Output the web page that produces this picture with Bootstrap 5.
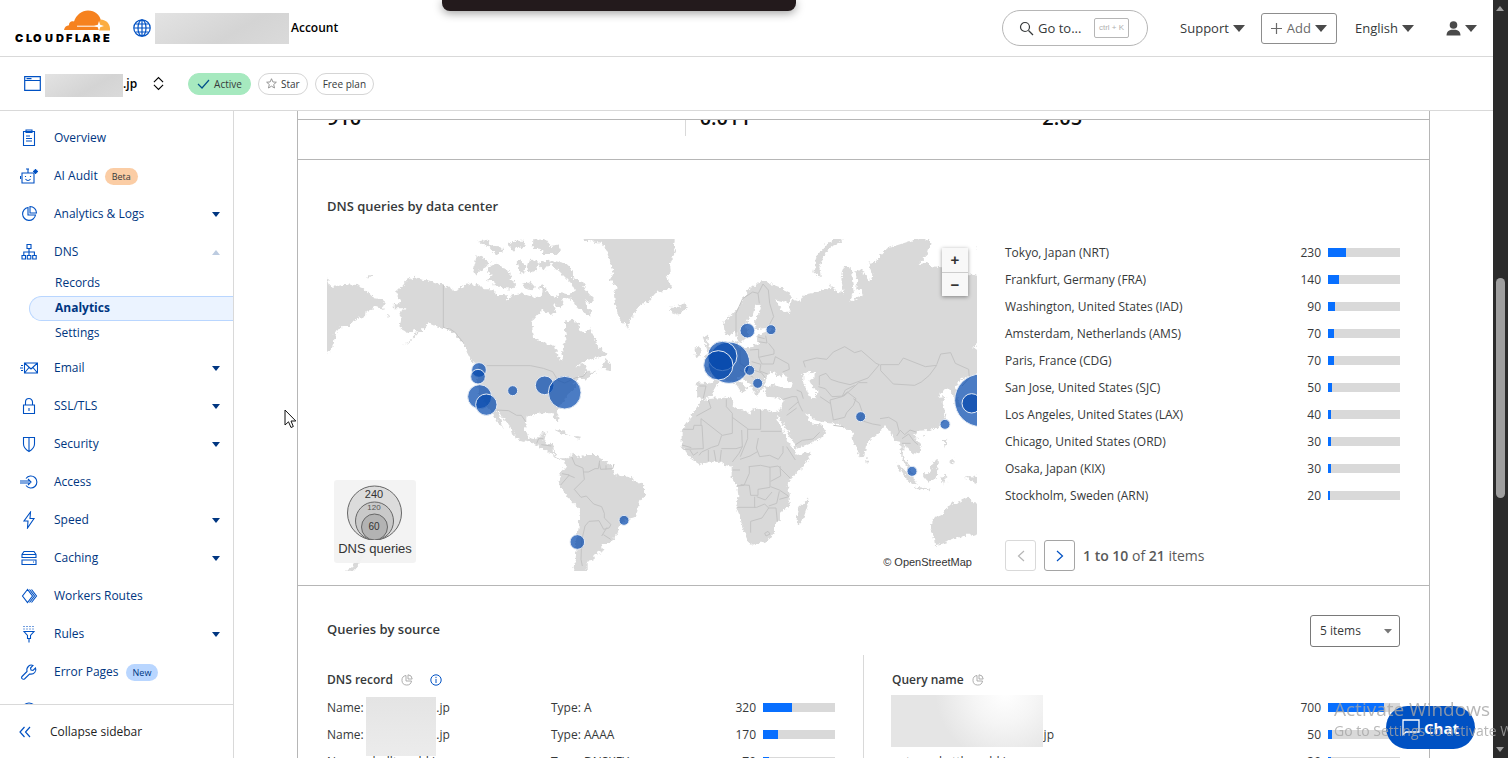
<!DOCTYPE html>
<html lang="en">
<head>
<meta charset="utf-8">
<meta name="viewport" content="width=device-width, initial-scale=1">
<title>DNS Analytics | Cloudflare</title>
<link href="https://cdn.jsdelivr.net/npm/bootstrap@5.3.0/dist/css/bootstrap.min.css" rel="stylesheet">
<style>
body{font:12px/20px "Open Sans","Noto Sans",sans-serif;color:#36393a;background:#fff;overflow:hidden}
a{color:inherit;text-decoration:none}
button{font:inherit}
svg{flex:none;display:block}
.ln{fill:none;stroke:currentColor;stroke-width:1.2}
.blue{color:#0051c3}
.top-row{height:57px;border-bottom:1px solid #d9d9d9;padding:0 16px 0 15px}
.brand{margin-right:22px}
.zone-row{height:54px;border-bottom:1px solid #d9d9d9;padding:0 24px}
.s13{font-size:13px}
.redact{background:linear-gradient(150deg,#e3e3e3,#d4d4d4 60%,#dadada)}
.redact-account{width:134px;height:31px;margin:0 2px 0 4px}
.redact-zone{width:78px;height:23px}
.goto{width:146px;height:36px;border:1px solid #b6b6b6;border-radius:18px;background:#fff;color:#36393a;padding:0 18px 0 16px;margin-right:32px}
.keys{border:1px solid #b6b6b6;border-radius:2px;color:#b0b0b0;font:8px/18px "Liberation Sans",sans-serif;padding:0 4px;height:20px;background:none}
.tri{width:0;height:0;border:6px solid transparent;border-top:7px solid #4a4a4a;border-bottom:0}
.addbtn{height:31px;border:1px solid #8d8d8d;border-radius:3px;background:#fff;color:#6a6a6a;padding:0 9px 0 8px;margin:0 18px 0 16px}
.userlink{margin-left:32px}
.pill{height:22px;border:1px solid #d5d5d5;border-radius:11px;background:#fff;font-size:10px;line-height:20px;padding:0 7px;color:#36393a}
.pill.on{background:#a6e9bf;border-color:#a6e9bf;padding:0 8px}
.side{width:234px;border-right:1px solid #d9d9d9;color:#003681}
.side-nav{padding-top:8px}
.side-nav a{height:38px;padding:0 13px 0 20px}
.side-nav a svg.ico{width:18px;height:18px;color:#0051c3;stroke-width:1.1;margin-right:16px}
.sub{margin-bottom:3px}
.side-nav .sub a{height:25px;padding:0 0 1px 25px;margin-left:29px;border:1px solid transparent;border-right:0;border-radius:13px 0 0 13px}
.side-nav .sub a.current{background:#ebf3ff;border-color:#b9d6ff;font-weight:700}
.caret{width:0;height:0;border:4px solid transparent;border-top:5px solid #003681;border-bottom:0}
.caret.up{border:4px solid transparent;border-bottom:5px solid #bccbe0;border-top:0}
.tag{font-size:9px;line-height:17px;border-radius:9px;padding:0 7px;margin-left:7px}
.tag-beta{background:#fbcda5;color:#36393a}
.tag-new{background:#b9d6ff;color:#003681}
.collapse-row{height:54px;border-top:1px solid #d9d9d9;color:#222;padding:0 19px;background:#fff;gap:19px}
.content-col{padding:0 63px;min-width:0}
.panel{border:1px solid #b6b6b6;border-width:0 1px;height:100%}
.strip{height:9px;border-bottom:1px solid #b6b6b6}
.stats{height:40px;padding:0 29px;overflow:hidden;border-bottom:1px solid #b6b6b6}
.stats b{font-size:20px;font-weight:600;line-height:28px;color:#111;display:block;padding-bottom:4px;margin-bottom:23px}
.stats b.cut{border-left:1px solid #d9d9d9;padding-left:14px}
.sect{padding:0 29px}
.sect-map{border-bottom:1px solid #b6b6b6;padding-top:36px;padding-bottom:14px}
.sect-src{padding-top:29px}
h2{font-size:13px;line-height:20px;font-weight:600;margin:0}
h3{font-size:12px;line-height:20px;font-weight:600;margin:0}
.map-grid{display:grid;grid-template-columns:650fr 395fr;gap:28px;margin-top:23px}
.map-box{position:relative}
.map-box svg{width:100%;height:auto}
.zoomer{position:absolute;top:9px;right:9px;width:26px;box-shadow:0 1px 4px rgba(0,0,0,.4)}
.zoomer button{display:block;width:26px;height:24px;border:0;background:#f8f8f8;color:#333;font:700 15px/22px "Liberation Sans",sans-serif;padding:0}
.zoomer button+button{border-top:1px solid #ccc}
.credit{position:absolute;right:5px;bottom:0;font:11px/18px "Liberation Sans",sans-serif;color:#333}
.legend-box{position:absolute;left:7px;bottom:8px;width:82px;height:83px;border-radius:3px;background:rgba(242,242,242,.94);font:13px/17px "Liberation Sans",sans-serif;color:#333;text-align:center}
.data{width:100%;table-layout:fixed}
.data td{height:27px;padding:0;white-space:nowrap}
.data .num{width:60px;text-align:right;padding-right:7px}
.data .bar{width:72px}
.data .kind{width:152px}
.masked{display:inline-block;width:83px;text-align:right}
.masked.wide{width:162px}
.progress{--bs-progress-height:9px;--bs-progress-bg:#d9d9d9;--bs-progress-bar-bg:#086fff;border-radius:0}
.pgbtn{width:31px;height:31px;border:1px solid #a5a5a5;border-radius:3px;background:#fff;color:#0051c3;padding:0}
.pgbtn:disabled{border-color:#d9d9d9;color:#b6b6b6}
.count{color:#595959;font-size:14px}
.count b{font-weight:600}
.picker{width:90px;height:32px;border:1px solid #797979;border-radius:3px;padding:0 9px;color:#36393a;appearance:none;background:#fff url("data:image/svg+xml,%3Csvg xmlns='http://www.w3.org/2000/svg' width='8' height='5'%3E%3Cpath d='M0 0h8L4 4.500z' fill='%23777'/%3E%3C/svg%3E") no-repeat right 7px center}
.src-grid{display:grid;grid-template-columns:1fr 1px 1fr;gap:28px;margin-top:8px}
.src-grid .rule{background:#d9d9d9;height:200px}
.src-head{padding:15px 0 4px}
.mask-names{position:absolute;left:39px;top:42px;width:70px;height:59px;background:linear-gradient(#e4e4e4,#ececec)}
.mask-query{position:absolute;left:-1px;top:40px;width:152px;height:52px;background:radial-gradient(circle at 75% -5%,#fff,#f5f5f5 25%,#e5e5e5 55%)}
.dimmed{color:#a5a5a5;stroke-width:.9}
.info{margin-left:17px;stroke-width:1}
.rail{width:15px;background:#2b2b2b;position:relative}
.rail span{position:absolute;left:3px;width:9px;border-radius:5px;background:#9f9f9f;top:36.7%;height:29%}
.rail i{position:absolute;left:3px;border:4px solid transparent}
.rail .u{top:2px;border-bottom:5px solid #9f9f9f}
.rail .d{bottom:2px;border-top:5px solid #9f9f9f}
.tab-top{position:fixed;left:442px;top:0;width:354px;height:11px;background:#231a1c;border-radius:0 0 8px 8px;box-shadow:0 2px 10px rgba(0,0,0,.4)}
.pointer{position:fixed;left:284px;top:409px}
.chat{position:fixed;right:33px;bottom:9px;width:89px;height:43px;border:0;border-radius:22px;background:#0051c3;color:#fff;font-size:15px;font-weight:700}
.notice{position:fixed;left:1334px;bottom:16px;color:rgba(165,165,165,.8);white-space:nowrap;font-size:14px;line-height:22px;pointer-events:none}
.notice div{font-size:19px}
</style>
</head>
<body class="vh-100 d-flex">
<div class="d-flex flex-column flex-grow-1 overflow-hidden">
  <header class="top-row d-flex align-items-center flex-shrink-0">
    <a href="#" aria-label="Cloudflare" class="brand"><svg width="96" height="36" viewBox="0 0 96 36">
      <path d="M49 20c.500-3 2.500-4.500 5-4.700-.400-3 2.500-5 5-3.800C61 5 67 .5 73 .5c7 0 12 4.500 13 10.500l-2 9z" fill="#f6821f"/>
      <path d="M84 20.500H95c.500-6-3-11-10-11l-1 6z" fill="#fbad41"/>
      <path d="M62 16.200h20" stroke="#fff" fill="none"/>
      <path d="M84 11l1.200 3.800L89 16l-3.800 1.200L84 21l-1.200-3.800L79 16l3.800-1.200z" fill="#fff"/>
      <text y="32" font-family="Inter,sans-serif" font-weight="900" font-size="11" fill="#000"><tspan x="0">C</tspan><tspan x="11">L</tspan><tspan x="18">O</tspan><tspan x="30">U</tspan><tspan x="41">D</tspan><tspan x="51">F</tspan><tspan x="60">L</tspan><tspan x="67">A</tspan><tspan x="78">R</tspan><tspan x="88">E</tspan></text></svg></a>
    <svg class="ln blue" width="18" height="18" viewBox="0 0 18 18"><circle cx="9" cy="9" r="8.200"/><ellipse cx="9" cy="9" rx="4" ry="8.200"/><path d="M9 1v16M1 9h16M2.500 5h13M2.500 13h13"/></svg>
    <span class="redact redact-account"></span>
    <a href="#" class="fw-semibold text-black">Account</a>
    <div class="ms-auto d-flex align-items-center s13">
      <button class="goto d-flex align-items-center"><svg class="ln me-1" width="15" height="15" viewBox="0 0 15 15"><circle cx="6" cy="6" r="4.500"/><path d="M9.500 9.500L14 14"/></svg>Go to...<kbd class="keys ms-auto">ctrl + K</kbd></button>
      <a href="#" class="d-flex align-items-center">Support<span class="tri ms-1"></span></a>
      <button class="addbtn d-flex align-items-center"><svg class="ln me-1" width="13" height="13" viewBox="0 0 13 13"><path d="M6.500 1v11M1 6.500h11"/></svg>Add<span class="tri ms-1"></span></button>
      <a href="#" class="d-flex align-items-center">English<span class="tri ms-1"></span></a>
      <a href="#" class="userlink d-flex align-items-center gap-1" aria-label="User"><svg width="15" height="15" viewBox="0 0 15 15" fill="#4a4a4a"><circle cx="7.500" cy="4" r="3.800"/><path d="M.5 14.500c0-4 2.500-5.500 5-5.800h4c2.500.300 5 1.800 5 5.800z"/></svg><span class="tri"></span></a>
    </div>
  </header>
  <div class="zone-row d-flex align-items-center flex-shrink-0">
    <svg class="ln blue" width="17" height="15" viewBox="0 0 17 15"><path d="M.7.700h15.600v13.600H.7zM.7 4.500h15.600M2.500 2.600h5"/></svg>
    <span class="redact redact-zone ms-1 mt-1"></span><span class="text-black fw-semibold">.jp</span>
    <button class="border-0 bg-transparent p-0 mx-3 pe-2 ps-0" aria-label="Switch site"><svg class="ln text-black" width="11" height="15" viewBox="0 0 12 15"><path d="M1 6l5-5 5 5M1 9l5 5 5-5"/></svg></button>
    <div class="d-flex s-gap" style="gap:7px">
    <span class="pill on d-flex align-items-center"><svg class="ln me-1" style="color:#00508a" width="13" height="10" viewBox="0 0 13 10"><path d="M1 5l4 4 7-8"/></svg>Active</span>
    <button class="pill d-flex align-items-center"><svg class="me-1" width="11" height="11" viewBox="0 0 12 12" fill="none" stroke="#8d8d8d"><path d="M6 .8l1.500 3.500 3.800.300-2.900 2.500.900 3.800L6 8.900 2.700 10.900l.900-3.800L.7 4.600l3.800-.3z"/></svg>Star</button>
    <span class="pill">Free plan</span>
    </div>
  </div>
  <div class="d-flex flex-grow-1 overflow-hidden">
    <aside class="side d-flex flex-column flex-shrink-0">
      <nav class="side-nav flex-grow-1 overflow-hidden" id="nav"></nav>
      <button class="collapse-row d-flex align-items-center border-start-0 border-end-0 border-bottom-0 flex-shrink-0"><svg class="ln blue" width="12" height="12" viewBox="0 0 12 12"><path d="M5.500 1L1 6l4.500 5M11 1L6.500 6l4.500 5"/></svg>Collapse sidebar</button>
    </aside>
    <main class="content-col flex-grow-1 overflow-hidden">
      <div class="panel">
        <div class="strip"></div>
        <div class="stats row g-0 align-items-end flex-nowrap"><b class="col-4">910</b><b class="col-4 cut">0.011</b><b class="col-4">2.05</b></div>
        <section class="sect sect-map">
          <h2>DNS queries by data center</h2>
          <div class="map-grid">
            <div class="map-box">
              <svg viewBox="0 0 1950 996" role="img" aria-label="World map of DNS queries">
                <defs><filter id="coast" x="0" y="0" width="100%" height="100%" color-interpolation-filters="sRGB"><feTurbulence type="fractalNoise" baseFrequency=".1" numOctaves="2" seed="4"/><feDisplacementMap in="SourceGraphic" scale="18" xChannelSelector="R" yChannelSelector="G"/></filter></defs>
                <g filter="url(#coast)">
                <g transform="translate(-21 -27)" fill="#d9d9d9">
                  <path d="M10 143L21 145 30 165 40 170 80 163 110 165 128 172 145 188 162 205 182 208 200 222 188 228 192 242 170 228 158 238 140 243 138 258 115 265 100 272 85 290 60 292 45 310 42 335 30 365 10 372z"/>
                  <path d="M138 140l10-4 10 3-8 5zM200 254l8 4-4 4zM75 1025l20-16 14-14 14-24 12 8-18 24-20 22z"/>
                  <path d="M285 140L300 148 330 152 345 160 370 163 405 182 430 168 452 158 458 168 470 162 492 178 520 178 528 195 560 195 562 212 575 195 605 190 640 200 665 200 668 180 655 170 672 165 690 195 705 205 720 185 730 215 725 235 700 225 705 250 690 255 668 238 650 255 638 270 634 300 640 322 665 335 705 348 712 375 722 392 730 380 725 355 740 335 735 300 735 275 755 270 775 280 778 300 795 310 808 295 825 325 835 350 860 375 830 385 800 390 775 405 762 415 790 402 800 410 795 425 830 425 805 440 795 450 780 440 760 460 770 470 745 490 735 510 715 530 710 545 718 575 708 572 698 550 660 550 620 560 615 600 625 622 645 628 660 622 665 608 680 605 672 640 700 642 702 672 720 685 740 685 735 695 710 685 690 668 655 650 630 635 600 630 580 618 575 595 555 570 535 545 526 538 540 565 552 597 535 580 515 545 495 520 478 495 470 460 472 420 480 405 455 395 440 365 430 340 405 312 385 297 345 288 325 280 300 305 280 325 250 347 275 325 292 305 280 300 262 310 238 292 245 265 235 250 260 235 220 235 222 222 245 215 228 185 245 170 262 150z"/>
                  <path d="M470 75l40 20-12 16-14 8-16 18-8-12zM505 110l25-12 14 12 28 18-2 22 20 14-12 12-30-2-28-8 4-14-24-2 18-14-16-10zM590 95l10-8 16 20-4 26-14-6zM630 85l26 10-4 24-20 10-10-12zM605 165l26-10 14 16-14 12zM475 35l24-6 14 14 12 8 26 2-4 14-20 4-24-22zM560 42l30-10 22 0 6 18-30 4-6 8zM640 30l36-2 14 20 24-4 8 14-12 14-40 0-6-14-26-4zM665 95l30-4 44 10 20 18 0 26 40 16-10 10 36 40-12 10-18-10 8 24 14 14-8 10-36-24-14-28-34-4-6-14 28 4 18-12-10-20-38-38-28-22-18 22-16-20zM675 230l30 4 4 14-24 6zM845 410l8-14 4-18 4 14 12 10 0 18-14-2zM700 598l30 6 22 14-16-4-20-8zM765 618l18 2-4 6-12-2z"/>
                  <path d="M785 15L1065 15 1062 50 1066 65 1050 100 1052 125 1038 140 1048 160 1060 168 1040 182 1010 185 985 215 955 228 945 250 930 270 925 293 910 280 895 260 885 225 882 190 890 170 870 150 880 120 868 95 862 65 845 38 800 32z"/>
                  <path d="M735 690L763 668 770 680 800 675 830 675 842 687 875 705 885 735 930 742 975 770 975 795 957 815 950 850 943 862 915 870 900 885 893 908 870 942 845 942 850 960 820 975 825 988 803 992 803 1035 760 1035 768 990 765 940 775 900 780 838 745 805 715 760 720 732 738 710z"/>
                </g>
                <g transform="translate(939 -27)" fill="#d9d9d9">
                  <path d="M375 150L395 163 420 172 445 183 456 205 445 218 420 212 402 208 418 225 424 245 452 245 445 225 465 208 482 212 492 195 515 190 545 182 572 176 565 160 590 185 612 190 604 150 612 112 632 110 636 150 642 190 628 216 650 205 668 198 662 180 648 178 652 150 645 125 665 118 690 155 697 135 685 98 708 95 722 75 742 55 790 40 850 20 872 38 862 75 835 103 870 95 870 108 905 112 985 132 1025 140 1025 340 998 350 1025 370 1025 430 990 440 960 450 945 475 950 500 965 530 950 530 938 490 925 475 900 488 898 500 922 498 908 515 916 550 912 575 898 592 870 600 835 602 822 615 845 650 842 665 822 674 806 655 792 645 788 675 802 695 810 715 822 735 812 735 796 705 784 680 780 635 765 632 748 600 735 585 725 600 690 630 678 650 672 680 660 682 640 635 636 600 620 600 606 592 600 582 570 580 530 572 505 555 495 550 510 572 525 585 540 582 558 600 548 620 520 635 470 656 462 640 440 600 415 562 408 548 418 545 428 508 400 502 380 500 372 485 376 475 360 478 352 500 338 480 330 465 318 450 300 440 292 445 318 470 322 478 306 490 290 465 262 450 240 450 228 470 212 500 190 508 172 500 170 457 210 460 222 450 215 432 195 420 200 410 235 385 262 370 280 350 278 335 292 330 296 350 330 352 355 340 352 315 378 305 402 300 398 292 350 297 345 270 362 240 362 222 345 225 340 250 322 270 318 290 325 310 318 325 300 340 290 320 288 300 270 315 254 308 250 275 275 255 295 235 310 205 325 180 350 160z"/>
                  <path d="M188 320L205 316 200 335 212 355 225 380 190 385 205 365zM164 355l14-8 8 10-4 20-18 4zM92 230l18 0 24-10 6 16-24 18-22-8zM520 127L530 77 560 43 585 25 612 25 606 35 572 50 550 80 538 110 543 145zM880 695l14-8-4 60-28 5-12-14-2-8 20 0zM768 700l22 16 36 34 0 16-16-8-24-28zM828 770l44 6-4 5-38-4zM905 740l16-3-8 8 6 14-8-6-2 16zM912 630l10-4-6 16 2 10-6-4zM930 690l12-4-2 14-12-2zM975 740l14-2 36 4 0 26-22-10zM678 682l8 14-6 4zM845 618l10-4-2 10zM1005 50l20-6 0 18zM-8 765L12 765 18 780 0 802z"/>
                  <path d="M185 510L205 507 240 505 272 500 280 512 278 530 300 538 330 550 338 535 375 540 412 545 412 565 432 610 445 640 468 665 470 675 512 665 508 685 490 710 455 742 443 765 450 800 448 825 420 848 420 868 405 885 405 905 385 932 365 938 330 944 320 925 308 895 303 870 288 832 295 800 292 770 275 745 275 710 255 705 240 695 210 695 180 704 150 685 125 650 125 600 150 565 165 540z"/>
                  <path d="M505 805L502 830 485 880 472 880 470 865 478 830 490 820zM985 800L1000 820 1025 822 1025 910 1000 918 985 910 960 925 940 925 925 935 905 942 885 945 882 925 873 890 875 868 905 855 925 830 940 815 955 822 965 808z"/>
                  <path fill="#fff" d="M490 430L512 425 525 430 522 445 508 452 520 475 532 480 530 505 510 503 500 480 490 460zM372 468L375 445 392 425 410 430 405 442 420 440 432 430 438 445 458 458 455 472 420 470 395 464 385 472z"/>
                </g>
                </g>
                <g fill="none" stroke="#c3c3c3" stroke-width="3" stroke-linejoin="round">
                  <g transform="translate(-21 -27)"><path d="M370 165v127l22 6 14 10 24 30M500 407h132l38 8 28 10 16 26 20 8 34-16 22-4 12-16M530 540l36 2 24 14 14 0 14 20M650 640l6-14 14 0M664 644l30 4M755 680l10 24 24 10 4 34-30 30 20 24 16-4 22 24 24 8 8 20 0 14 20 20-6 10-16 4-14-26-30 2-12 14-10 44-2 56 4 20M722 765l26-30-22-4M744 735l20 8M789 726l16 0 20-10 10 0 4-24M838 700l4 18 36-2 4-14M858 706l0 12M845 918l16-26M850 914l22 14"/></g>
                  <g transform="translate(939 -27)"><path d="M288 320l0-70 20-44 30-20 16 4 4 30M355 190l14-28 16 18 4 40 12 40-16 30M178 468l20 0-8 36M355 335l26 4-4-22M350 320l24 6M330 360l26-2 0 24 46-10 0-12-16-20M356 382l10 20 34 0 6-22 40 22 2 16-20 8M335 395l28 8-4 20 26 10M300 360l0 40 30 20M340 420l24 8 12 16M300 420l40 22M496 412l-6-18 40-10 30 4 20-22 34-16 30 18 20-6 44 38 10 4-34 40-54 20-34-8-24-8-14-18-20 8 0 28M722 404l54 0 14-20 66 26 34-4-22 30-24 20-20 10-64-4-38-40zM890 404l12-32 30-4 14 32 40 18 2 26-22 24M535 470l21 6 20 24 36-2 44-40 26 0M570 510l36-10 16-14 26 20-8 20-20 22-6 14-34 8zM640 506l18 14 10 30-10 20 40 12 24 4M540 500l30 20M606 500l10-20 28-14M610 590l-30-4M720 566l26-4 24 14 8 30-8 12M780 600l14 14 16-14 18 6M786 626l20-14 16 22 12 10M786 640l26 0M430 508l26-8 14 0 8 24 10 20M446 540l28-24M440 556l30-22M465 645l22-14 32-4 20-20M470 480l14 6 6 20M205 510l8 24-44 24M130 598h30l2-12 24 0 4 70-60 2M183 586l0-20 64 50 30-6 0-60-18-20 0-22M277 562l46 34 0 30-22 54M324 598l38 0 0-58M362 604h62M245 616l-10 30-20 6-30 14-8 10M244 656h44l20-6M244 660l-4 34M305 600l2 50-10 20-20 26M355 624l-6 30 10 26 30-4 26 12 14-20 0-20M300 688l30-10 24-14M328 710l0 20-16 36-22 2M326 710l36-4 28 6 0 60-36 6 0 18-22 0-4-30-26-2M388 712l26-4 36 36M420 708l2 30-30 16M392 770l26 10 30 20M350 800l26 10 20-24M290 832l60 0 24-10 12 12-20 30-34 10 0 34M344 800l0 34M418 784l-8 36-24 8M446 800l-28 8M440 650l26 40M386 834l22 0 4 40M374 910l10-6 6 8-12 6zM126 645l28 8M150 660l10 16 14-10M205 660l0 34M222 660l6 34M278 720h22"/></g>
                </g>
                <g id="pins" fill="#0649ad" fill-opacity=".72" stroke="#e4ebf5" stroke-width="3"></g>
              </svg>
              <div class="zoomer"><button aria-label="Zoom in">+</button><button aria-label="Zoom out">−</button></div>
              <div class="legend-box"><svg viewBox="0 0 82 60" fill="#dcdcdc" stroke="#666"><circle cx="40.500" cy="33" r="27"/><circle cx="40.500" cy="41" r="19" fill="#c9c9c9"/><circle cx="40.500" cy="47" r="13" fill="#b3b3b3"/><g fill="#333" stroke="none" text-anchor="middle" font-family="Liberation Sans,sans-serif"><text x="40" y="18" font-size="11">240</text><text x="40" y="30" font-size="8" fill="#555">120</text><text x="40" y="50" font-size="10">60</text></g></svg>DNS queries</div>
              <span class="credit">© OpenStreetMap</span>
            </div>
            <div class="d-flex flex-column justify-content-between">
              <table class="data" id="centers"></table>
              <div class="d-flex align-items-center gap-2">
                <button class="pgbtn d-flex align-items-center justify-content-center" disabled aria-label="Previous"><svg class="ln" width="8" height="12" viewBox="0 0 8 12"><path d="M7 1L1.500 6 7 11"/></svg></button>
                <button class="pgbtn d-flex align-items-center justify-content-center" aria-label="Next"><svg class="ln" width="8" height="12" viewBox="0 0 8 12"><path d="M1 1l5.500 5L1 11"/></svg></button>
                <span class="count"><b>1 to 10</b> of <b>21</b> items</span>
              </div>
            </div>
          </div>
        </section>
        <section class="sect sect-src">
          <div class="d-flex justify-content-between align-items-start"><h2 class="pt-1">Queries by source</h2><select class="picker" aria-label="Items per list"><option>5 items</option><option>10 items</option></select></div>
          <div class="src-grid">
            <div class="position-relative">
              <div class="src-head d-flex align-items-center"><h3>DNS record</h3><svg class="ln dimmed ms-2" width="12" height="12" viewBox="0 0 12 12"><path d="M5 1.500A4.800 4.800 0 1 0 10.500 7H5zM7 .8V5h4.200A4.500 4.500 0 0 0 7 .8z"/></svg><svg class="ln blue info" width="12" height="12" viewBox="0 0 12 12"><circle cx="6" cy="6" r="5.200"/><path d="M6 5v4M6 2.800v1.300"/></svg></div>
              <table class="data" id="records"></table>
              <div class="mask-names"></div>
            </div>
            <div class="rule"></div>
            <div class="position-relative">
              <div class="src-head d-flex align-items-center"><h3>Query name</h3><svg class="ln dimmed ms-2" width="12" height="12" viewBox="0 0 12 12"><path d="M5 1.500A4.800 4.800 0 1 0 10.500 7H5zM7 .8V5h4.200A4.500 4.500 0 0 0 7 .8z"/></svg></div>
              <table class="data" id="names"></table>
              <div class="mask-query"></div>
            </div>
          </div>
        </section>
      </div>
    </main>
  </div>
</div>
<div class="rail flex-shrink-0"><i class="u"></i><span></span><i class="d"></i></div>
<div class="tab-top"></div>
<svg class="pointer" width="13" height="20" viewBox="0 0 13 20"><path d="M1 1v15l3.500-3.200L7 18.500l2.300-1L7 12h4.800z" fill="#fff" stroke="#111"/></svg>
<button class="chat d-flex align-items-center justify-content-center gap-1"><svg width="18" height="17" viewBox="0 0 18 17" fill="none" stroke="#fff" stroke-width="1.300"><path d="M1 15.500V1h16v12H4z"/></svg>Chat</button>
<div class="notice"><div>Activate Windows</div>Go to Settings to activate Windows.</div>
<script src="https://cdn.jsdelivr.net/npm/bootstrap@5.3.0/dist/js/bootstrap.bundle.min.js"></script>
<script>
const nav = [
 ['Overview','<path d="M3.500 2.500h11v14h-11zM6 1h6v2.500H6zM6 7h4M6 9.500h6M6 12h6"/>'],
 ['AI Audit','<path d="M2 6h12v10H2zM8 6V2M6 2h3M5.500 9v1M10.500 9v1M5.500 12c1.500 2 3.500 2 5 0M.5 9v3M15.500 2v5M13 4.500h5M13.800 2.800l3.400 3.400M17.200 2.800l-3.400 3.400"/>','','Beta'],
 ['Analytics & Logs','<path d="M8 2.500A6.500 6.500 0 1 0 15.500 10H8zM10 1.500V8h6.500A6.500 6.500 0 0 0 10 1.500z"/>','down'],
 ['DNS','<path d="M7 1.500h4v4H7zM2 12.500h3.500V16H2zM7.300 12.500h3.500V16H7.300zM12.700 12.500h3.500V16h-3.500zM9 5.500v7M3.800 12.500V9h10.600v3.500"/>','up'],
 ['Email','<path d="M4.500 4h13v10h-13zM4.500 4L11 10l6.500-6M4.500 14L9 8.500M17.500 14L13 8.500M0 9h3M1 6.500h2M1 11.500h2"/>','down'],
 ['SSL/TLS','<path d="M3.500 8h11v8.500h-11zM5.500 8V5a3.500 3.500 0 0 1 7 0v3M9 11v3"/>','down'],
 ['Security','<path d="M3.500 2.500h11V9c0 4-3 6-5.500 7.500C6.500 15 3.500 13 3.500 9zM9 2.500v14"/>','down'],
 ['Access','<path d="M6 5.500a6 6 0 1 1 0 7M0 8h10M0 10h10M8 6l3 3-3 3"/>'],
 ['Speed','<path d="M10.500 1L4 10h4L7.500 17 14 7.500h-4z"/>','down'],
 ['Caching','<path d="M2 8.500V5.500L4 2.500h10l2 3v3zM2 5.500h14M2 11h14v4.500H2zM13 13h1"/>','down'],
 ['Workers Routes','<path d="M7.500 2.500L2.500 9l5 6.500 5-6.500zM9.500 2.500l5 6.500-5 6.500M11.500 2.500l5 6.500-5 6.500"/>'],
 ['Rules','<path d="M4 6.500h10l-3.500 4v3h-3v-3zM4 1v1M7 1v1M10 1v1M13 1v1M4 3.500v1M7 3.500v1M10 3.500v1M13 3.500v1M9 13.500v4"/>','down'],
 ['Error Pages','<path d="M2 15.500c-1-1 0-2 0-2l5-5C6 4 10 1 13 2.500L10.500 5l.500 2 2 .500L15.500 5C17 8 14 12 9.500 11l-5 5s-1.500.700-2.500-.5z"/>','','New'],
 ['Scrape Shield','<circle cx="9" cy="9" r="7"/><circle cx="9" cy="9" r="3"/>']];
document.getElementById('nav').innerHTML = nav.map(([t,p,c,g]) =>
 `<a href="#" class="d-flex align-items-center"><svg class="ico ln" viewBox="0 0 18 18">${p}</svg>${t.replace('&','&amp;')}${g?`<span class="tag tag-${g.toLowerCase()}">${g}</span>`:''}${c?`<span class="caret ${c} ms-auto"></span>`:''}</a>` +
 (t==='DNS' ? '<div class="sub"><a href="#" class="d-flex align-items-center">Records</a><a href="#" class="d-flex align-items-center current">Analytics</a><a href="#" class="d-flex align-items-center">Settings</a></div>' : '')).join('');
const row = (cells,n,w) => `<tr>${cells}<td class="num">${n}</td><td class="bar"><div class="progress"><div class="progress-bar" style="width:${w}%"></div></div></td></tr>`;
document.getElementById('centers').innerHTML = [['Tokyo, Japan (NRT)',230,25],['Frankfurt, Germany (FRA)',140,15],['Washington, United States (IAD)',90,10],['Amsterdam, Netherlands (AMS)',70,8.4],['Paris, France (CDG)',70,8.4],['San Jose, United States (SJC)',50,5.6],['Los Angeles, United States (LAX)',40,4.2],['Chicago, United States (ORD)',30,4.2],['Osaka, Japan (KIX)',30,4.2],['Stockholm, Sweden (ARN)',20,2.8]]
 .map(([t,n,w]) => row(`<td>${t}</td>`,n,w)).join('');
document.getElementById('records').innerHTML = [['Name: <span class="masked">.jp</span>','A',320,40],['Name: <span class="masked">.jp</span>','AAAA',170,21],['Name: shelltworld.jp','DNSKEY',70,8]]
 .map(([t,k,n,w]) => row(`<td>${t}</td><td class="kind">Type: ${k}</td>`,n,w)).join('');
document.getElementById('names').innerHTML = [['',700,78],['<span class="masked wide">.jp</span>',50,5],['autoworkatthworld.jp',30,4]]
 .map(([t,n,w]) => row(`<td>${t}</td>`,n,w)).join('');
const pins = [[456,393,22],[453,413,22],[458,473,36],[478,497,32],[557,455,15],[653,439,28],[713,461,49],[891,844,15],[751,909,22],
 [1261,275,22],[1332,272,15],[1206,371,62],[1186,351,44],[1174,379,44],[1268,394,15],[1292,433,15],[1601,533,15],[1854,556,15],[1755,697,15],[1962,484,79],[1934,493,29]];
document.getElementById('pins').innerHTML = pins.map(([x,y,r]) => `<circle cx="${x}" cy="${y}" r="${r}"/>`).join('');
</script>
</body>
</html>
